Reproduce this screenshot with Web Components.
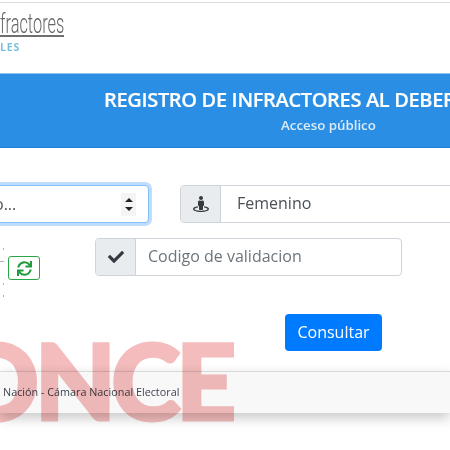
<!DOCTYPE html>
<html lang="es">
<head>
<meta charset="utf-8">
<title>Registro de infractores</title>
<style>
  html, body { margin: 0; padding: 0; background: #fff; overflow: hidden; height: 450px; }
  body { font-family: "Open Sans", "Liberation Sans", sans-serif; color: #495057; }
</style>
</head>
<body>
<app-page>
  <site-header></site-header>
  <title-banner heading="REGISTRO DE INFRACTORES AL DEBER" sub="Acceso público"></title-banner>
  <form-area></form-area>
  <site-footer>Nación - Cámara Nacional Electoral</site-footer>
  <once-mark>ONCE</once-mark>
</app-page>

<script>
const ICONS = {
  check: '<path d="M173.898 439.404l-166.4-166.4c-9.997-9.997-9.997-26.206 0-36.204l36.203-36.204c9.997-9.998 26.207-9.998 36.204 0L192 312.69 432.095 72.596c9.997-9.997 26.207-9.997 36.204 0l36.203 36.204c9.997 9.997 9.997 26.206 0 36.204l-294.4 294.401c-9.998 9.997-26.207 9.997-36.204-.001z"/>',
  sync: '<path d="M440.65 12.57l4 82.77A247.16 247.16 0 0 0 255.83 8C134.73 8 33.91 94.92 12.29 209.82A12 12 0 0 0 24.09 224h49.05a12 12 0 0 0 11.67-9.26 175.91 175.91 0 0 1 317-56.94l-101.46-4.86a12 12 0 0 0-12.57 12v47.41a12 12 0 0 0 12 12H500a12 12 0 0 0 12-12V12a12 12 0 0 0-12-12h-47.37a12 12 0 0 0-11.98 12.57zM255.83 432a175.61 175.61 0 0 1-146-77.8l101.8 4.87a12 12 0 0 0 12.57-12v-47.4a12 12 0 0 0-12-12H12a12 12 0 0 0-12 12V500a12 12 0 0 0 12 12h47.35a12 12 0 0 0 12-12.6l-4.15-82.57A247.17 247.17 0 0 0 255.83 504c121.11 0 221.93-86.92 243.55-201.82a12 12 0 0 0-11.8-14.18h-49.05a12 12 0 0 0-11.67 9.26A175.86 175.86 0 0 1 255.83 432z"/>',
  street: '<path d="M367.9 329.76c-4.62 5.3-9.78 10.1-15.9 13.65v22.94c66.52 9.34 112 28.05 112 49.65 0 30.93-93.12 56-208 56S48 446.93 48 416c0-21.6 45.48-40.3 112-49.65v-22.94c-6.12-3.55-11.28-8.35-15.9-13.65C58.87 345.34 0 378.05 0 416c0 53.02 114.62 96 256 96s256-42.98 256-96c0-37.95-58.87-70.66-144.1-86.24zM256 128c35.35 0 64-28.65 64-64S291.35 0 256 0s-64 28.65-64 64 28.65 64 64 64zm-64 192v96c0 17.67 14.33 32 32 32h64c17.67 0 32-14.33 32-32v-96c17.67 0 32-14.33 32-32v-96c0-26.51-21.49-48-48-48h-11.8c-11.07 5.03-23.26 8-36.2 8s-25.13-2.97-36.2-8H208c-26.51 0-48 21.49-48 48v96c0 17.67 14.33 32 32 32z"/>'
}

function icon (name, size) {
  return `<svg xmlns="http://www.w3.org/2000/svg" viewBox="0 0 512 512" width="${size}" height="${size}" fill="currentColor">${ICONS[name]}</svg>`
}

class AppPage extends HTMLElement {
  constructor () {
    super()
    this.attachShadow({ mode: 'open' }).innerHTML = `
      <style>
        :host { display: block; position: relative; width: 450px; height: 450px; overflow: hidden; background: #fff; }
      </style>
      <slot></slot>`
  }
}

class SiteHeader extends HTMLElement {
  constructor () {
    super()
    this.attachShadow({ mode: 'open' }).innerHTML = `
      <style>
        :host { display: block; height: 70px; margin-top: 2px; border-top: 1px solid #ddd; }
        .logo { display: flex; flex-direction: column; align-items: flex-start; padding-top: 9px; }
        .rule { width: 64px; height: 23px; border-bottom: 2px solid #6f6f6f; }
        .name {
          display: inline-block; transform: scaleX(.585); transform-origin: left top;
          font: 300 28px/24px Roboto, sans-serif; color: #666; white-space: nowrap;
        }
        .tag { font: 700 10.5px/12px "Open Sans", sans-serif; letter-spacing: .8px; color: #7cc0e0; margin-top: 4px; }
      </style>
      <div class="logo">
        <div class="rule"><span class="name">fractores</span></div>
        <div class="tag">LES</div>
      </div>`
  }
}

class TitleBanner extends HTMLElement {
  constructor () {
    super()
    this.attachShadow({ mode: 'open' }).innerHTML = `
      <style>
        :host {
          display: block; height: 75px; box-sizing: border-box; background: #2a8fe4;
          border-top: 1px solid #8fc4f0; border-bottom: 1px solid #1f7fdc;
          color: #fff; font-family: "Open Sans", sans-serif; white-space: nowrap;
        }
        .title { font-size: 20px; line-height: 27px; font-weight: 600; margin: 12px 0 0 104px; letter-spacing: -.33px; -webkit-text-stroke: .2px #fff; }
        .sub { font-size: 13.3px; line-height: 17px; font-weight: 600; margin: 4px 0 0 281px; color: #dcebf9; }
      </style>
      <div class="title">${this.getAttribute('heading')}</div>
      <div class="sub">${this.getAttribute('sub')}</div>`
  }
}

class InputGroup extends HTMLElement {
  constructor () {
    super()
    this.attachShadow({ mode: 'open' }).innerHTML = `
      <style>
        :host {
          display: flex; box-sizing: border-box; height: 38px; flex: none;
          border: 1px solid #ced4da; border-radius: 4px; background: #fff;
          font: 16px/24px "Open Sans", sans-serif;
        }
        .addon {
          width: 39px; flex: none; display: flex; align-items: center; justify-content: center;
          background: #e9ecef; border-right: 1px solid #ced4da; border-radius: 3px 0 0 3px; color: #343a40;
        }
        .value { padding-left: 16px; padding-top: 5px; white-space: nowrap; }
        :host([placeholder]) .value { padding-left: 12px; color: #6c757d; }
      </style>
      <div class="addon">${icon(this.getAttribute('icon'), this.getAttribute('size') || 16)}</div>
      <div class="value"><slot></slot></div>`
  }
}

class SelectBox extends HTMLElement {
  constructor () {
    super()
    this.attachShadow({ mode: 'open' }).innerHTML = `
      <style>
        :host {
          display: flex; align-items: center; justify-content: space-between; box-sizing: border-box; flex: none;
          height: 38px; border: 1px solid #80bdff; border-radius: 4px; background: #fff;
          box-shadow: 0 0 0 3px rgba(0, 123, 255, .25); color: #495057;
          font: 16px/24px "Open Sans", sans-serif; padding: 0 12px 0 93px;
        }
        .spin {
          width: 15px; height: 23px; background: #f4f4f4; display: flex; flex-direction: column;
          align-items: center; justify-content: center; gap: 5px;
        }
        .spin i { width: 0; height: 0; border-left: 4px solid transparent; border-right: 4px solid transparent; }
        .up { border-bottom: 4px solid #222; }
        .down { border-top: 4px solid #222; }
      </style>
      <span><slot></slot></span>
      <div class="spin"><i class="up"></i><i class="down"></i></div>`
  }
}

class RefreshButton extends HTMLElement {
  constructor () {
    super()
    this.attachShadow({ mode: 'open' }).innerHTML = `
      <style>
        :host {
          display: flex; align-items: center; justify-content: center; box-sizing: border-box; flex: none;
          width: 32px; height: 24px; border: 1px solid #28a745; border-radius: 3px; color: #1f9c3c; background: #fff;
        }
      </style>
      ${icon('sync', 15)}`
  }
}

class CaptchaBox extends HTMLElement {
  constructor () {
    super()
    this.attachShadow({ mode: 'open' }).innerHTML = `
      <style>
        :host { display: flex; flex: none; width: 95px; align-items: flex-start; }
        svg { display: block; flex: none; }
        refresh-button { margin-top: 18px; }
      </style>
      <svg xmlns="http://www.w3.org/2000/svg" width="8" height="62" viewBox="0 0 8 62" fill="#b0b0b0">
        <rect x="3" y="10" width="1" height="2"/>
        <rect x="0" y="23" width="4" height="1"/>
        <rect x="3" y="45" width="1" height="2"/>
        <rect x="3" y="57" width="1" height="2"/>
      </svg>
      <refresh-button></refresh-button>`
  }
}

class BlueButton extends HTMLElement {
  constructor () {
    super()
    this.attachShadow({ mode: 'open' }).innerHTML = `
      <style>
        :host {
          display: block; box-sizing: border-box; width: 97px; height: 37px; background: #007bff; color: #fff;
          border-radius: 4px; text-align: center; font: 16px/37px "Open Sans", sans-serif;
        }
      </style>
      <slot></slot>`
  }
}

class FormArea extends HTMLElement {
  constructor () {
    super()
    this.attachShadow({ mode: 'open' }).innerHTML = `
      <style>
        :host { display: block; height: 223px; box-sizing: border-box; padding-top: 37px; }
        .row { display: flex; align-items: flex-start; }
        .one { gap: 31px; margin-left: -100px; }
        .one select-box { width: 249px; }
        .one input-group { width: 300px; }
        .two { margin-top: 15px; height: 60px; }
        .two input-group { width: 307px; }
        .three { margin: 16px 0 0 285px; }
      </style>
      <div class="row one">
        <select-box>o...</select-box>
        <input-group icon="street" size="16">Femenino</input-group>
      </div>
      <div class="row two">
        <captcha-box></captcha-box>
        <input-group icon="check" size="16" placeholder>Codigo de validacion</input-group>
      </div>
      <div class="row three"><blue-button>Consultar</blue-button></div>`
  }
}

class SiteFooter extends HTMLElement {
  constructor () {
    super()
    this.attachShadow({ mode: 'open' }).innerHTML = `
      <style>
        :host {
          display: block; box-sizing: border-box; height: 42px; background: #f8f8f8; border-top: 1px solid #d9d9d9;
          box-shadow: 0 5px 12px rgba(0, 0, 0, .22); padding: 11px 0 0 3px;
          font: 10.8px/17px "Open Sans", sans-serif; color: #3f4650; white-space: nowrap;
        }
      </style>
      <slot></slot>`
  }
}

class OnceMark extends HTMLElement {
  constructor () {
    super()
    this.attachShadow({ mode: 'open' }).innerHTML = `
      <style>
        :host {
          position: absolute; left: -46px; top: 319px; pointer-events: none; mix-blend-mode: multiply;
          font: 900 105px/120px Lato, sans-serif; letter-spacing: -4.5px; white-space: nowrap;
          color: #f4bcbc; -webkit-text-stroke: 3px #f4bcbc;
        }
      </style>
      <slot></slot>`
  }
}

customElements.define('app-page', AppPage)
customElements.define('site-header', SiteHeader)
customElements.define('title-banner', TitleBanner)
customElements.define('input-group', InputGroup)
customElements.define('select-box', SelectBox)
customElements.define('refresh-button', RefreshButton)
customElements.define('captcha-box', CaptchaBox)
customElements.define('blue-button', BlueButton)
customElements.define('form-area', FormArea)
customElements.define('site-footer', SiteFooter)
customElements.define('once-mark', OnceMark)
</script>
</body>
</html>
